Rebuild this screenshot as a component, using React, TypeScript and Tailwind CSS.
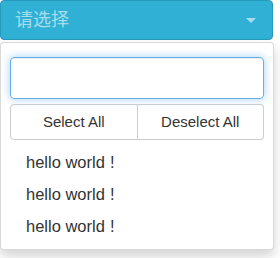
import React from "react";

export default function App() {
  const font = { fontFamily: '"Liberation Sans", Arial, "Noto Sans CJK SC", sans-serif' };
  return (
    <div className="w-[280px] h-[258px] bg-white relative" style={font}>
      <button className="w-[273px] h-[40px] bg-[#31b0d5] border border-[#269abc] rounded-[4px] flex items-center justify-between pl-[14px] pr-[16px]">
        <span className="text-[18px] text-[#a6ddee] leading-none">请选择</span>
        <span className="w-0 h-0 border-l-[5px] border-r-[5px] border-t-[5px] border-l-transparent border-r-transparent border-t-[#a6ddee]" />
      </button>
      <div className="absolute left-0 top-[42px] w-[274px] h-[208px] bg-white border border-[rgba(0,0,0,0.15)] rounded-[4px] shadow-[0_6px_12px_rgba(0,0,0,0.175)] px-[9px] pt-[14px]">
        <input className="block w-full h-[42px] border border-[#66afe9] rounded-[4px] outline-none shadow-[inset_0_1px_1px_rgba(0,0,0,0.075),0_0_8px_rgba(102,175,233,0.6)]" />
        <div className="flex mt-[5px] h-[36px]">
          <button className="flex-1 border border-[#ccc] rounded-l-[4px] text-[15px] text-[#333]">Select All</button>
          <button className="flex-1 border border-l-0 border-[#ccc] rounded-r-[4px] text-[15px] text-[#333]">Deselect All</button>
        </div>
        <div className="mt-[6px]">
          {[0, 1, 2].map((i) => (
            <div key={i} className="h-[32px] flex items-center pl-[16px] text-[16.5px] text-[#333]">
              hello world<span className="ml-[5px]">!</span>
            </div>
          ))}
        </div>
      </div>
    </div>
  );
}
